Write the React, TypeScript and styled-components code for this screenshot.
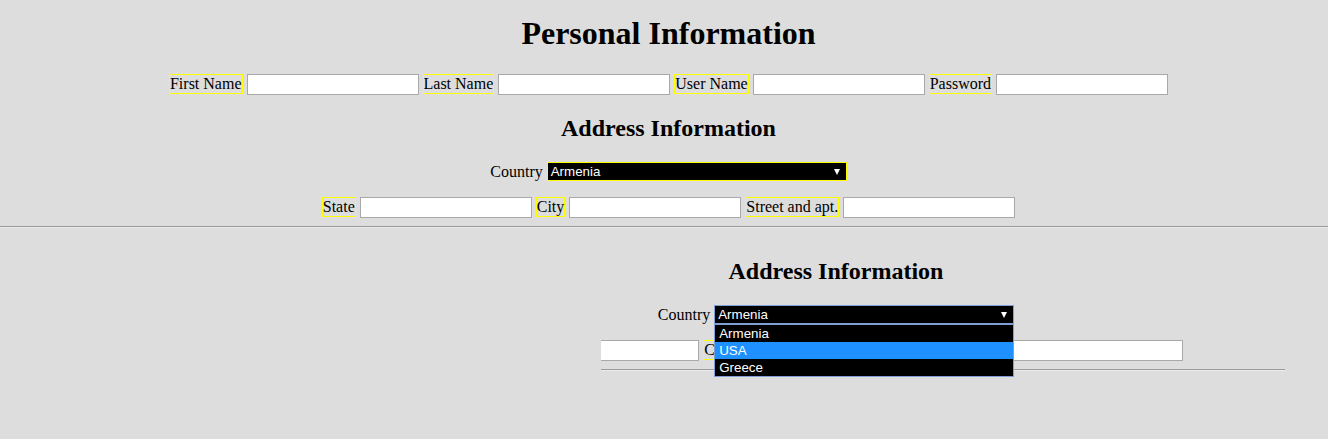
import React from "react";
import styled, { createGlobalStyle } from "styled-components";

const GlobalStyle = createGlobalStyle`
  html, body {
    margin: 0;
    padding: 0;
    background: #dddddd;
  }
  body {
    font-family: "Liberation Serif", "Times New Roman", serif;
    font-size: 16px;
    color: #000;
  }
`;

const Page = styled.main`
  display: flex;
  flex-direction: column;
`;

const TopForm = styled.section`
  padding-left: 9px;
  display: flex;
  flex-direction: column;
  align-items: center;
`;

const Title = styled.h1`
  margin: 15px 0 0;
  font-size: 32px;
  line-height: 37px;
  font-weight: bold;
`;

const SubTitle = styled.h2<{ $top: number }>`
  margin: ${(p) => p.$top}px 0 0;
  font-size: 24px;
  line-height: 28px;
  font-weight: bold;
`;

const Row = styled.div<{ $top: number; $align?: string }>`
  display: flex;
  justify-content: center;
  align-items: ${(p) => p.$align || "flex-start"};
  gap: 4px;
  margin-top: ${(p) => p.$top}px;
  white-space: nowrap;
`;

const FieldLabel = styled.label`
  border: 1px solid #ffff00;
  line-height: 18px;
  flex: none;
`;

const PlainLabel = styled.span`
  line-height: 18px;
  flex: none;
`;

const TextInput = styled.input`
  box-sizing: border-box;
  width: 172px;
  height: 21px;
  border: 1px solid #a9a9a9;
  background: #fff;
  padding: 1px 2px;
  margin: 0;
  outline: none;
  flex: none;
  font-family: "Liberation Sans", Arial, sans-serif;
  font-size: 13.33px;
`;

const SelectBox = styled.div<{ $open?: boolean }>`
  position: relative;
  box-sizing: border-box;
  width: 300px;
  height: 19px;
  border: 1px solid ${(p) => (p.$open ? "#7f9fd4" : "#ffff00")};
  background: #000;
  color: #fff;
  display: flex;
  align-items: center;
  justify-content: space-between;
  padding: 0 6px 0 3px;
  font-family: "Liberation Sans", Arial, sans-serif;
  font-size: 13.33px;
  flex: none;
`;

const Arrow = styled.span`
  width: 0;
  height: 0;
  border-left: 3px solid transparent;
  border-right: 3px solid transparent;
  border-top: 6px solid #fff;
`;

const OptionList = styled.ul`
  position: absolute;
  z-index: 2;
  top: calc(100% + 1px);
  left: -1px;
  box-sizing: border-box;
  width: 300px;
  margin: 0;
  padding: 0;
  list-style: none;
  border: 1px solid #7f9fd4;
  background: #000;
`;

const OptionItem = styled.li<{ $active?: boolean }>`
  height: 17px;
  line-height: 17px;
  padding-left: 4px;
  background: ${(p) => (p.$active ? "#1e90ff" : "#000")};
  color: #fff;
`;

const FullRule = styled.hr`
  margin: 8px 0 0;
  height: 0;
  border: none;
  border-top: 1px solid #9a9a9a;
  border-bottom: 1px solid #ececec;
`;

const ClipBox = styled.section`
  margin-left: 601px;
  width: 684px;
  padding-bottom: 30px;
  overflow-x: clip;
`;

const CenterColumn = styled.div`
  width: 470px;
  display: flex;
  flex-direction: column;
  align-items: center;
`;

const countries = ["Armenia", "USA", "Greece"];

function AddressRows({ top, open }: { top: number; open?: boolean }) {
  return (
    <>
      <SubTitle $top={top}>Address Information</SubTitle>
      <Row $top={20} $align="center">
        <PlainLabel>Country</PlainLabel>
        <SelectBox $open={open}>
          <span>Armenia</span>
          <Arrow />
          {open && (
            <OptionList>
              {countries.map((c) => (
                <OptionItem key={c} $active={c === "USA"}>
                  {c}
                </OptionItem>
              ))}
            </OptionList>
          )}
        </SelectBox>
      </Row>
      <Row $top={16}>
        <FieldLabel>State</FieldLabel>
        <TextInput type="text" />
        <FieldLabel>City</FieldLabel>
        <TextInput type="text" />
        <FieldLabel>Street and apt.</FieldLabel>
        <TextInput type="text" />
      </Row>
    </>
  );
}

export default function App() {
  return (
    <Page>
      <GlobalStyle />
      <TopForm>
        <Title>Personal Information</Title>
        <Row $top={22}>
          <FieldLabel>First Name</FieldLabel>
          <TextInput type="text" />
          <FieldLabel>Last Name</FieldLabel>
          <TextInput type="text" />
          <FieldLabel>User Name</FieldLabel>
          <TextInput type="text" />
          <FieldLabel>Password</FieldLabel>
          <TextInput type="password" />
        </Row>
        <AddressRows top={19} />
      </TopForm>
      <FullRule />
      <ClipBox>
        <CenterColumn>
          <AddressRows top={29} open />
        </CenterColumn>
        <FullRule />
      </ClipBox>
    </Page>
  );
}
